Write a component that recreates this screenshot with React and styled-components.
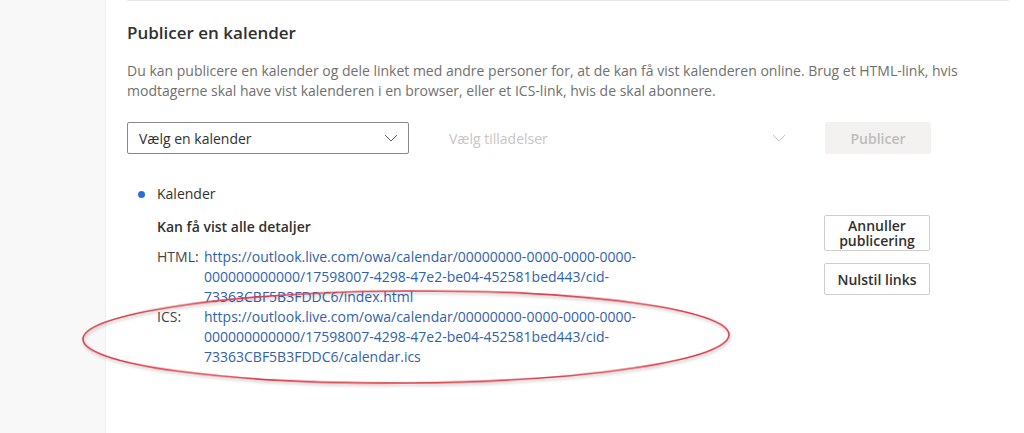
import React from 'react';
import styled, { createGlobalStyle } from 'styled-components';

const GlobalStyle = createGlobalStyle`
  html, body {
    margin: 0;
    padding: 0;
    background: #fff;
  }
  body {
    font-family: 'Open Sans', 'Noto Sans', sans-serif;
    color: #323130;
  }
`;

const links = {
  html: 'https://outlook.live.com/owa/calendar/00000000-0000-0000-0000-000000000000/17598007-4298-47e2-be04-452581bed443/cid-73363CBF5B3FDDC6/index.html',
  ics: 'https://outlook.live.com/owa/calendar/00000000-0000-0000-0000-000000000000/17598007-4298-47e2-be04-452581bed443/cid-73363CBF5B3FDDC6/calendar.ics',
};

const Chevron = ({ color }) => (
  <svg width='14' height='8' viewBox='0 0 14 8'>
    <path d='M1 1 L7 7 L13 1' fill='none' stroke={color} strokeWidth='1' />
  </svg>
);

const App = () => {
  return (
    <>
      <GlobalStyle />
      <Page>
        <Sidebar />
        <Main>
          <Content>
            <Title>Publicer en kalender</Title>
            <Description>
              Du kan publicere en kalender og dele linket med andre personer for, at de kan få vist kalenderen online. Brug et HTML-link, hvis modtagerne skal have vist kalenderen i en browser, eller et ICS-link, hvis de skal abonnere.
            </Description>
            <Toolbar>
              <Select $width={282}>
                <span>Vælg en kalender</span>
                <Chevron color='#605e5c' />
              </Select>
              <Select $width={360} $disabled>
                <span>Vælg tilladelser</span>
                <Chevron color='#c8c6c4' />
              </Select>
              <Button $disabled>Publicer</Button>
            </Toolbar>
            <Published>
              <Details>
                <CalendarName>Kalender</CalendarName>
                <Permission>Kan få vist alle detaljer</Permission>
                <LinkRow>
                  <LinkLabel>HTML:</LinkLabel>
                  <Link href='#'>{links.html}</Link>
                </LinkRow>
                <LinkRow>
                  <LinkLabel>ICS:</LinkLabel>
                  <Link href='#'>{links.ics}</Link>
                </LinkRow>
              </Details>
              <Actions>
                <Button>Annuller publicering</Button>
                <Button>Nulstil links</Button>
              </Actions>
            </Published>
          </Content>
        </Main>
      </Page>
      <Marker width='1024' height='433' viewBox='0 0 1024 433'>
        <defs>
          <filter id='shadow' x='-10%' y='-30%' width='120%' height='160%'>
            <feDropShadow dx='1' dy='2' stdDeviation='1.5' floodColor='#000' floodOpacity='0.25' />
          </filter>
        </defs>
        <ellipse
          cx='406'
          cy='337'
          rx='323'
          ry='46'
          transform='rotate(-0.4 406 337)'
          fill='none'
          stroke='#d8404c'
          strokeWidth='1.6'
          filter='url(#shadow)'
        />
      </Marker>
    </>
  );
};

const Page = styled.div`
  display: flex;
  width: 1024px;
  height: 433px;
  overflow: hidden;
`;

const Sidebar = styled.aside`
  width: 105px;
  flex-shrink: 0;
  background: #f8f8f8;
  border-right: 1px solid #f0f0f0;
`;

const Main = styled.main`
  flex: 1;
  padding: 0 15px 0 21px;
`;

const Content = styled.div`
  border-top: 1px solid #e8e8e8;
  padding-top: 18px;
`;

const Title = styled.h2`
  margin: 0;
  font-size: 17px;
  font-weight: 600;
  line-height: 28px;
  color: #323130;
`;

const Description = styled.p`
  margin: 14px 0 0;
  font-size: 14px;
  line-height: 20px;
  color: #707070;
  max-width: 860px;
`;

const Toolbar = styled.div`
  display: flex;
  align-items: center;
  margin-top: 21px;
`;

const Select = styled.div`
  width: ${(p) => p.$width}px;
  height: 32px;
  box-sizing: border-box;
  display: flex;
  align-items: center;
  justify-content: space-between;
  padding: 0 10px 0 11px;
  margin-right: 28px;
  border: 1px solid ${(p) => (p.$disabled ? 'transparent' : '#8a8886')};
  border-radius: 2px;
  font-size: 14px;
  color: ${(p) => (p.$disabled ? '#c8c6c4' : '#323130')};
`;

const Button = styled.button`
  width: 106px;
  min-height: 32px;
  box-sizing: border-box;
  padding: 2px 6px;
  border: 1px solid ${(p) => (p.$disabled ? '#f3f2f1' : '#cfcdcb')};
  border-radius: 2px;
  background: ${(p) => (p.$disabled ? '#f3f2f1' : '#fff')};
  color: ${(p) => (p.$disabled ? '#bebdbc' : '#323130')};
  font-family: inherit;
  font-size: 14px;
  font-weight: 600;
  line-height: 15px;
  cursor: pointer;
`;

const Published = styled.div`
  display: flex;
  justify-content: space-between;
  margin-top: 30px;
  padding-right: 79px;
`;

const Details = styled.div`
  font-size: 14px;
  line-height: 20px;
`;

const CalendarName = styled.div`
  position: relative;
  padding-left: 30px;
  &::before {
    content: '';
    position: absolute;
    left: 11px;
    top: 7px;
    width: 7px;
    height: 7px;
    border-radius: 50%;
    background: #2b6fd6;
  }
`;

const Permission = styled.div`
  margin: 13px 0 10px 30px;
  font-weight: 600;
`;

const LinkRow = styled.div`
  display: flex;
  margin-left: 30px;
`;

const LinkLabel = styled.span`
  width: 47px;
  flex-shrink: 0;
  color: #444;
`;

const Link = styled.a`
  width: 450px;
  color: #2f62ad;
  text-decoration: none;
`;

const Actions = styled.div`
  display: flex;
  flex-direction: column;
  gap: 12px;
  margin-top: 31px;
`;

const Marker = styled.svg`
  position: absolute;
  left: 0;
  top: 0;
  pointer-events: none;
`;

export default App;
